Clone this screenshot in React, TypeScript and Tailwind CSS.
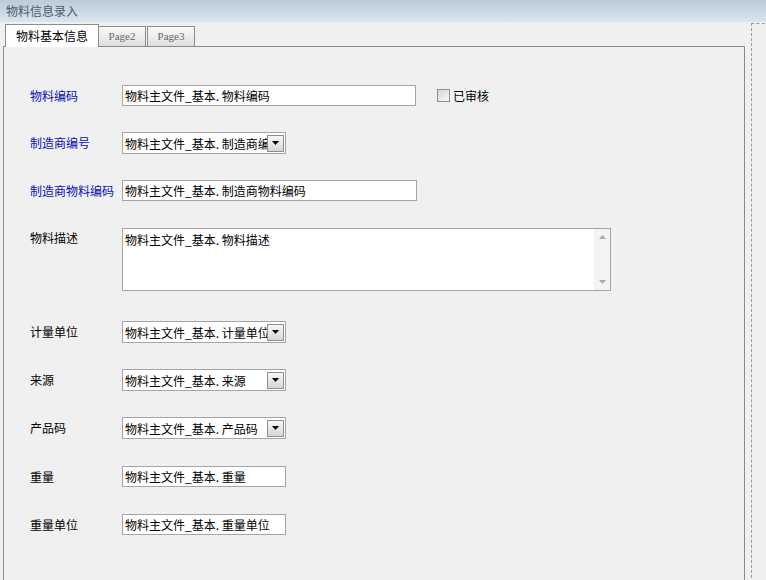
import React from "react";

const FONT = { fontFamily: '"Noto Sans CJK SC", "Liberation Sans", sans-serif' };

function TextBox({ w, text }: { w: string; text: string }) {
  return (
    <div className={`${w} h-[21px] bg-white border border-[#a5a5a5] flex items-center pl-[2px] text-[12px] leading-[17px] text-black whitespace-nowrap overflow-hidden shrink-0`}>
      {text}
    </div>
  );
}

function Combo({ text }: { text: string }) {
  return (
    <div className="w-[164px] h-[22px] bg-white border border-[#a5a5a5] flex items-center pl-[2px] pr-[1px] text-[12px] text-black shrink-0">
      <div className="flex-1 overflow-hidden whitespace-nowrap leading-[17px]">{text}</div>
      <div className="w-[17px] h-[17px] border border-[#8e8e8e] bg-gradient-to-b from-[#f8f8f8] to-[#d6d6d6] flex items-center justify-center shrink-0">
        <svg width="7" height="4" viewBox="0 0 7 4">
          <path d="M0 0 H7 L3.5 4 Z" fill="#000" />
        </svg>
      </div>
    </div>
  );
}

function Row({ label, blue, mt, children }: { label: string; blue?: boolean; mt: string; children: React.ReactNode }) {
  return (
    <div className={`flex items-center ${mt}`}>
      <div className={`w-[118px] shrink-0 pl-[26px] text-[12px] leading-none whitespace-nowrap ${blue ? "text-[#0c0cb8]" : "text-black"}`}>{label}</div>
      {children}
    </div>
  );
}

export default function App() {
  return (
    <div className="w-[766px] h-[580px] bg-[#f0f0f0] overflow-hidden relative" style={FONT}>
      {/* title bar */}
      <div className="h-[22px] bg-gradient-to-b from-[#bccbd9] to-[#d9e5f1] flex items-center pl-[6px] text-[12px] text-[#4d5a66] leading-none">
        物料信息录入
      </div>

      {/* tabs */}
      <div className="flex items-end h-[24px] pl-[5px] relative z-10">
        <div className="w-[94px] h-[23px] -mb-px bg-white border border-b-0 border-[#8d8d8d] flex items-center justify-center text-[12px] leading-none text-black">
          物料基本信息
        </div>
        <div className="w-[47px] h-[20px] border border-b-0 border-l-0 border-[#8d8d8d] bg-gradient-to-b from-[#fbfbfb] to-[#dedede] flex items-center justify-center text-[11px] leading-none text-[#666]" style={{ fontFamily: '"Liberation Serif", serif' }}>
          Page2
        </div>
        <div className="w-[48px] h-[20px] ml-px border border-b-0 border-[#8d8d8d] bg-gradient-to-b from-[#fbfbfb] to-[#dedede] flex items-center justify-center text-[11px] leading-none text-[#666]" style={{ fontFamily: '"Liberation Serif", serif' }}>
          Page3
        </div>
      </div>

      {/* panel */}
      <div className="ml-[3px] w-[742px] h-[540px] border border-b-0 border-[#8a8a8a] pt-[38px]">
        <Row label="物料编码" blue mt="mt-0">
          <TextBox w="w-[294px]" text="物料主文件_基本. 物料编码" />
          <div className="ml-[21px] w-[13px] h-[13px] border border-[#8f8f8f] bg-gradient-to-br from-[#d8d8d8] to-[#f6f6f6]" />
          <div className="ml-[3px] text-[12px] leading-none text-black">已审核</div>
        </Row>
        <Row label="制造商编号" blue mt="mt-[26px]">
          <Combo text="物料主文件_基本. 制造商编号" />
        </Row>
        <Row label="制造商物料编码" blue mt="mt-[26px]">
          <TextBox w="w-[295px]" text="物料主文件_基本. 制造商物料编码" />
        </Row>
        <div className="flex mt-[27px]">
          <div className="w-[118px] shrink-0 pl-[26px] pt-[4px] text-[12px] leading-none text-black">物料描述</div>
          <div className="w-[489px] h-[63px] bg-white border border-[#a5a5a5] flex">
            <div className="flex-1 pl-[2px] pt-[2px] text-[12px] leading-[17px] text-black">物料主文件_基本. 物料描述</div>
            <div className="w-[16px] h-full bg-[#f3f3f3] flex flex-col items-center justify-between py-[6px]">
              <svg width="7" height="4" viewBox="0 0 7 4"><path d="M0 4 H7 L3.5 0 Z" fill="#a8a8a8" /></svg>
              <svg width="7" height="4" viewBox="0 0 7 4"><path d="M0 0 H7 L3.5 4 Z" fill="#a8a8a8" /></svg>
            </div>
          </div>
        </div>
        <Row label="计量单位" mt="mt-[30px]">
          <Combo text="物料主文件_基本. 计量单位" />
        </Row>
        <Row label="来源" mt="mt-[26px]">
          <Combo text="物料主文件_基本. 来源" />
        </Row>
        <Row label="产品码" mt="mt-[26px]">
          <Combo text="物料主文件_基本. 产品码" />
        </Row>
        <Row label="重量" mt="mt-[27px]">
          <TextBox w="w-[164px]" text="物料主文件_基本. 重量" />
        </Row>
        <Row label="重量单位" mt="mt-[27px]">
          <TextBox w="w-[164px]" text="物料主文件_基本. 重量单位" />
        </Row>
      </div>

      {/* designer selection frame */}
      <div className="absolute left-[751px] top-[23px] w-[30px] h-[570px] border-l border-t border-dashed border-[#9a9a9a]" />
    </div>
  );
}
